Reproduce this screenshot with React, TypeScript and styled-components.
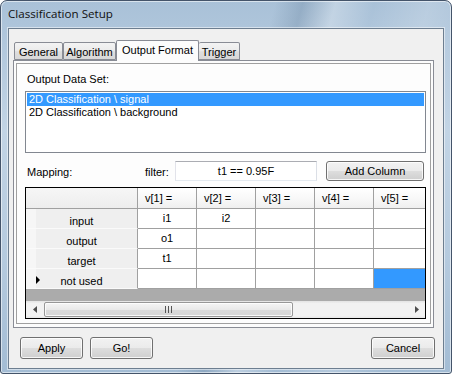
import React from 'react';
import styled, { createGlobalStyle } from 'styled-components';

const Global = createGlobalStyle`
  html, body { margin: 0; padding: 0; background: #ffffff; }
  body { font-family: "Liberation Sans", Arial, sans-serif; font-size: 11px; color: #000; }
  * { box-sizing: border-box; }
`;

const Window = styled.div`
  width: 452px;
  height: 374px;
  border: 1px solid #44546a;
  border-radius: 7px 7px 3px 3px;
  padding: 0 7px 4px 7px;
  display: flex;
  flex-direction: column;
  box-shadow: inset 0 0 0 1px rgba(255, 255, 255, 0.55);
  background:
    linear-gradient(105deg, rgba(255,255,255,0) 0%, rgba(255,255,255,0) 50%, rgba(70,100,130,0.22) 55%, rgba(255,255,255,0.28) 61%, rgba(255,255,255,0) 68%, rgba(255,255,255,0.18) 78%, rgba(255,255,255,0) 88%),
    linear-gradient(180deg, #a9c1d8 0%, #c2d4e5 35%, #b5cade 70%, #a3bcd4 100%);
`;

const TitleBar = styled.div`
  height: 27px;
  padding-left: 0;
  display: flex;
  align-items: center;
  font-family: "Open Sans", "Noto Sans", sans-serif;
  font-size: 11.6px;
  color: #101010;
  padding-bottom: 3px;
`;

const Client = styled.div`
  width: 436px;
  height: 341px;
  border: 1px solid #6d7e90;
  box-shadow: 0 0 0 1px rgba(255, 255, 255, 0.5);
  background: #f0f0f0;
  padding: 11px 9px 9px 4px;
  display: flex;
  flex-direction: column;
`;

const TabControl = styled.div`
  width: 421px;
  display: flex;
  flex-direction: column;
`;

const TabStrip = styled.div`
  height: 20px;
  display: flex;
  align-items: flex-end;
  padding-left: 1px;
  position: relative;
  z-index: 1;
`;

const Tab = styled.div<{ $active?: boolean; $w: number; $noLeft?: boolean }>`
  width: ${p => p.$w}px;
  height: ${p => (p.$active ? 21 : 18)}px;
  margin-bottom: ${p => (p.$active ? -1 : 0)}px;
  border: 1px solid #898c95;
  border-left-width: ${p => (p.$noLeft ? 0 : 1)}px;
  border-bottom: ${p => (p.$active ? 'none' : '1px solid #898c95')};
  border-radius: 2px 2px 0 0;
  background: ${p =>
    p.$active
      ? '#fcfcfc'
      : 'linear-gradient(180deg, #f3f3f3 0%, #ececec 45%, #dedede 55%, #d8d8d8 100%)'};
  text-align: center;
  line-height: 15px;
  padding-top: 2px;
  white-space: nowrap;
`;

const Panel = styled.div`
  height: 268px;
  border: 1px solid #898c95;
  background: #fcfcfc;
  padding: 2px 2px 3px 2px;
`;

const Page = styled.div`
  height: 261px;
  border: 1px solid #a0a0a0;
  background: #fdfdfd;
  padding: 9px 0 0 8px;
  display: flex;
  flex-direction: column;
`;

const Label = styled.div`
  height: 13px;
  line-height: 13px;
  padding-left: 2px;
`;

const ListBox = styled.div`
  margin-top: 5px;
  width: 401px;
  height: 62px;
  border: 1px solid #828790;
  background: #ffffff;
  padding: 1px;
`;

const ListItem = styled.div<{ $selected?: boolean }>`
  height: 13px;
  line-height: 13px;
  padding-left: 2px;
  background: ${p => (p.$selected ? '#3399ff' : 'transparent')};
  color: ${p => (p.$selected ? '#ffffff' : '#000000')};
`;

const MappingRow = styled.div`
  margin-top: 8px;
  height: 20px;
  width: 401px;
  display: flex;
  align-items: center;
`;

const RowLabel = styled.div<{ $w: number }>`
  width: ${p => p.$w}px;
  padding-left: 2px;
  line-height: 13px;
  padding-top: 2px;
`;

const FilterInput = styled.div`
  width: 142px;
  height: 20px;
  border: 1px solid;
  border-color: #abadb3 #dbdfe6 #e3e9ef #e2e3ea;
  background: #ffffff;
  text-align: center;
  line-height: 18px;
`;

const Button = styled.div<{ $w: number }>`
  width: ${p => p.$w}px;
  height: 100%;
  border: 1px solid #707070;
  border-radius: 3px;
  box-shadow: inset 0 0 0 1px rgba(255, 255, 255, 0.8);
  background: linear-gradient(180deg, #f2f2f2 0%, #ebebeb 48%, #dddddd 52%, #cfcfcf 100%);
  display: flex;
  align-items: center;
  justify-content: center;
  line-height: 13px;
`;

const AddButton = styled(Button)`
  margin-left: 9px;
`;

const GridFrame = styled.div`
  margin-top: 6px;
  width: 401px;
  height: 132px;
  border: 1px solid #000000;
  background: #ababab;
  display: flex;
  flex-direction: column;
`;

const Table = styled.div`
  display: grid;
  grid-template-columns: 112px repeat(4, 59px) 51px;
  grid-template-rows: 21px repeat(4, 20px);
`;

const Corner = styled.div`
  background: linear-gradient(180deg, #f6f6f6, #ededed);
  border-right: 1px solid #a0a0a0;
  border-bottom: 1px solid #a0a0a0;
`;

const ColHeader = styled.div<{ $last?: boolean }>`
  background: linear-gradient(180deg, #ffffff 0%, #f7f7f7 60%, #efefef 100%);
  border-right: ${p => (p.$last ? 'none' : '1px solid #a0a0a0')};
  border-bottom: 1px solid #a0a0a0;
  padding-left: 7px;
  padding-top: 2px;
  line-height: 17px;
  white-space: nowrap;
`;

const RowHeader = styled.div`
  display: grid;
  grid-template-columns: 14px 1fr 14px;
  align-items: center;
  background: linear-gradient(90deg, #f6f6f6 0 10px, #efefef 10px 100%);
  border-right: 1px solid #a0a0a0;
  border-bottom: 1px solid #fafafa;
  line-height: 13px;
`;

const RowHeaderText = styled.span`
  text-align: center;
  padding-top: 5px;
`;

const Indicator = styled.span`
  display: flex;
  justify-content: flex-end;
  padding-top: 2px;
`;

const Cell = styled.div<{ $selected?: boolean; $last?: boolean }>`
  background: ${p => (p.$selected ? '#3399ff' : '#ffffff')};
  border-right: ${p => (p.$last ? 'none' : '1px solid #a0a0a0')};
  border-bottom: 1px solid #a0a0a0;
  text-align: center;
  line-height: 17px;
  padding-top: 1px;
`;

const GrayFill = styled.div`
  flex: 1;
`;

const HScroll = styled.div`
  height: 17px;
  display: flex;
  align-items: stretch;
  background: linear-gradient(180deg, #e3e3e3 0%, #f2f2f2 15%, #f2f2f2 85%, #e8e8e8 100%);
`;

const ArrowBtn = styled.div`
  width: 17px;
  display: flex;
  align-items: center;
  justify-content: center;
`;

const Thumb = styled.div`
  width: 249px;
  margin: 1px 0 1px 1px;
  border: 1px solid #979797;
  border-radius: 2px;
  box-shadow: inset 0 0 0 1px rgba(255, 255, 255, 0.8);
  background: linear-gradient(180deg, #f5f5f5 0%, #e9e9e9 50%, #dadada 52%, #d6d6d6 100%);
  display: flex;
  align-items: center;
  justify-content: center;
`;

const Track = styled.div`
  flex: 1;
`;

const ButtonRow = styled.div`
  margin-top: 9px;
  height: 22px;
  display: flex;
  padding-left: 7px;
  margin-right: -1px;
`;

const GoButton = styled(Button)`
  margin-left: 7px;
`;

const Spacer = styled.div`
  flex: 1;
`;

const ArrowLeft = () => (
  <svg width="4" height="7" viewBox="0 0 4 7">
    <path d="M4 0 L0 3.5 L4 7 Z" fill="#4d4d4d" />
  </svg>
);

const ArrowRight = () => (
  <svg width="4" height="7" viewBox="0 0 4 7">
    <path d="M0 0 L4 3.5 L0 7 Z" fill="#4d4d4d" />
  </svg>
);

const RowArrow = () => (
  <svg width="4" height="8" viewBox="0 0 4 8">
    <path d="M0 0 L4 4 L0 8 Z" fill="#000000" />
  </svg>
);

const Grip = () => (
  <svg width="7" height="7" viewBox="0 0 7 7">
    <path d="M0.5 0 V7 M3.5 0 V7 M6.5 0 V7" stroke="#555" strokeWidth="1" />
  </svg>
);

const rows = [
  { name: 'input', values: ['i1', 'i2', '', '', ''] },
  { name: 'output', values: ['o1', '', '', '', ''] },
  { name: 'target', values: ['t1', '', '', '', ''] },
  { name: 'not used', values: ['', '', '', '', ''], current: true },
];

export default function App() {
  return (
    <>
      <Global />
      <Window>
        <TitleBar>Classification Setup</TitleBar>
        <Client>
          <TabControl>
            <TabStrip>
              <Tab $w={49}>General</Tab>
              <Tab $w={53}>Algorithm</Tab>
              <Tab $w={83} $active>Output Format</Tab>
              <Tab $w={41} $noLeft>Trigger</Tab>
            </TabStrip>
            <Panel>
              <Page>
                <Label>Output Data Set:</Label>
                <ListBox>
                  <ListItem $selected>2D Classification \ signal</ListItem>
                  <ListItem>2D Classification \ background</ListItem>
                </ListBox>
                <MappingRow>
                  <RowLabel $w={118}>Mapping:</RowLabel>
                  <RowLabel $w={32}>filter:</RowLabel>
                  <FilterInput>t1 == 0.95F</FilterInput>
                  <AddButton $w={98}>Add Column</AddButton>
                </MappingRow>
                <GridFrame>
                  <Table>
                    <Corner />
                    {[1, 2, 3, 4, 5].map(i => (
                      <ColHeader key={i} $last={i === 5}>v[{i}] =</ColHeader>
                    ))}
                    {rows.map(r => (
                      <React.Fragment key={r.name}>
                        <RowHeader>
                          <Indicator>{r.current ? <RowArrow /> : null}</Indicator>
                          <RowHeaderText>{r.name}</RowHeaderText>
                          <span />
                        </RowHeader>
                        {r.values.map((v, j) => (
                          <Cell key={j} $last={j === 4} $selected={r.current && j === 4}>
                            {v}
                          </Cell>
                        ))}
                      </React.Fragment>
                    ))}
                  </Table>
                  <GrayFill />
                  <HScroll>
                    <ArrowBtn><ArrowLeft /></ArrowBtn>
                    <Thumb><Grip /></Thumb>
                    <Track />
                    <ArrowBtn><ArrowRight /></ArrowBtn>
                  </HScroll>
                </GridFrame>
              </Page>
            </Panel>
          </TabControl>
          <ButtonRow>
            <Button $w={63}>Apply</Button>
            <GoButton $w={63}>Go!</GoButton>
            <Spacer />
            <Button $w={64}>Cancel</Button>
          </ButtonRow>
        </Client>
      </Window>
    </>
  );
}
